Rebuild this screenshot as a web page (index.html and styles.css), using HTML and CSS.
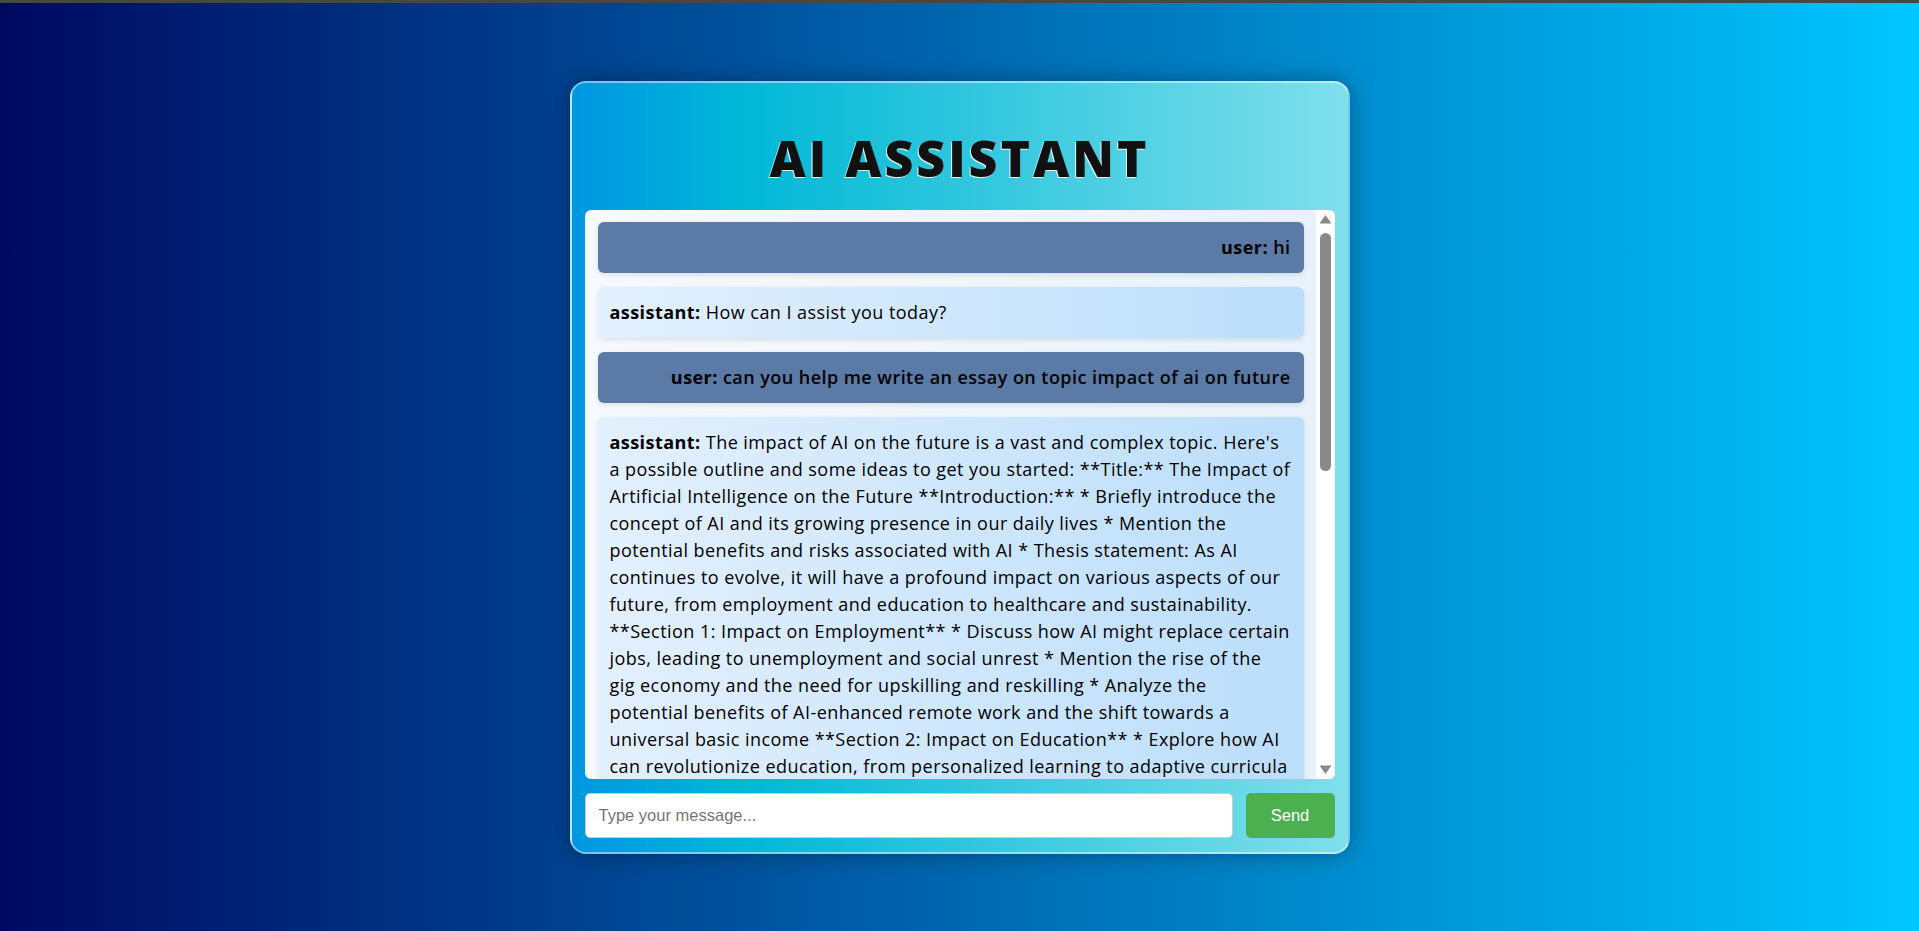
FILE: index.html
```html
<!DOCTYPE html>
<html lang="en">
<head>
<meta charset="utf-8">
<title>AI Assistant</title>
<link rel="stylesheet" href="styles.css">
</head>
<body>
<div class="topbar"></div>
<main class="page">
  <section class="card">
    <h1 class="title">AI ASSISTANT</h1>
    <div class="chat">
      <div class="messages">
        <div class="msg user"><b>user:</b> hi</div>
        <div class="msg assistant"><b>assistant:</b> How can I assist you today?</div>
        <div class="msg user"><b>user:</b> can you help me write an essay on topic impact of ai on future</div>
        <div class="msg assistant"><span class="lines"><b>assistant:</b> The impact of AI on the future is a vast and complex topic. Here's<br>a possible outline and some ideas to get you started: **Title:** The Impact of<br>Artificial Intelligence on the Future **Introduction:** * Briefly introduce the<br>concept of AI and its growing presence in our daily lives * Mention the<br>potential benefits and risks associated with AI * Thesis statement: As AI<br>continues to evolve, it will have a profound impact on various aspects of our<br>future, from employment and education to healthcare and sustainability.<br>**Section 1: Impact on Employment** * Discuss how AI might replace certain<br>jobs, leading to unemployment and social unrest * Mention the rise of the<br>gig economy and the need for upskilling and reskilling * Analyze the<br>potential benefits of AI-enhanced remote work and the shift towards a<br>universal basic income **Section 2: Impact on Education** * Explore how AI<br>can revolutionize education, from personalized learning to adaptive curricula</span><br>and intelligent tutoring systems * Discuss the potential risks of AI-driven education, such as bias in algorithms and the loss of human interaction * Examine the role of teachers in an AI-enhanced classroom **Section 3: Impact on Healthcare** * Describe how AI can improve diagnosis, treatment, and patient outcomes * Discuss the use of AI in medical research and drug discovery * Address concerns about data privacy and the ethics of AI in healthcare **Section 4: Impact on Sustainability** * Explain how AI can help address climate change through energy optimization and smart grids * Discuss the role of AI in agriculture, conservation, and resource management * Mention the environmental cost of training large AI models **Section 5: Ethical and Social Implications** * Explore issues of bias, fairness, and accountability in AI systems * Discuss the importance of transparency and explainability * Examine the need for regulation and international cooperation * Consider the impact of AI on privacy and surveillance **Conclusion:** * Summarize the main points of the essay * Restate the thesis statement * Offer a final thought on how society can prepare for an AI-driven future, emphasizing the importance of responsible development and human-centered design **Additional Tips:** * Use credible sources to support your arguments * Include real-world examples and case studies * Consider counterarguments and address them thoughtfully * Use clear and concise language. I hope this helps you get started on your essay! Let me know if you need any further assistance.</div>
      </div>
      <div class="scrollbar" aria-hidden="true">
        <svg class="arrow" width="19" height="19" viewBox="0 0 19 19"><path d="M9.5 6 L14.5 13 H4.5 Z" fill="#8a8a8a" stroke="#8a8a8a" stroke-width="1.2" stroke-linejoin="round"/></svg>
        <div class="track"><div class="thumb"></div></div>
        <svg class="arrow" width="19" height="19" viewBox="0 0 19 19"><path d="M9.5 13 L14.5 6 H4.5 Z" fill="#8a8a8a" stroke="#8a8a8a" stroke-width="1.2" stroke-linejoin="round"/></svg>
      </div>
    </div>
    <form class="composer" onsubmit="return false">
      <input class="input" type="text" placeholder="Type your message...">
      <button class="send" type="submit">Send</button>
    </form>
  </section>
</main>
</body>
</html>
```
FILE: styles.css
```css
* { box-sizing: border-box; }

html, body {
  margin: 0;
  height: 100%;
}

body {
  display: flex;
  flex-direction: column;
  background: linear-gradient(to right, #000960 0%, #00c6ff 100%);
  font-family: "Open Sans", "Noto Sans", sans-serif;
}

.topbar {
  height: 3px;
  background: #474747;
  flex: none;
}

.page {
  flex: 1;
  display: flex;
  align-items: center;
  justify-content: center;
}

.card {
  width: 780px;
  display: flex;
  flex-direction: column;
  padding: 13px 13px 14px;
  border: 2px solid rgba(255, 255, 255, 0.45);
  border-radius: 16px;
  background: linear-gradient(to right, #0096e2 0%, #00b8d6 22%, #80dfeb 100%);
  box-shadow: 0 0 22px rgba(0, 0, 0, 0.35);
}

.title {
  margin: 37px 0 27px;
  font-family: "Open Sans", "Noto Sans", sans-serif;
  font-weight: 800;
  font-size: 50px;
  line-height: 50px;
  letter-spacing: 3px;
  text-align: center;
  color: #111;
  text-shadow: -1px 1px 0 rgba(255, 255, 255, 0.85);
}

.chat {
  height: 569px;
  display: flex;
  overflow: hidden;
  border-radius: 6px;
  background: linear-gradient(to right, #f6f9fd, #e8f2fc);
}

.messages {
  flex: 1;
  min-width: 0;
  overflow: hidden;
  padding: 12px 12px 12px 13px;
}

.scrollbar {
  width: 19px;
  flex: none;
  display: flex;
  flex-direction: column;
  background: #fff;
}

.arrow {
  display: block;
  flex: none;
}

.track {
  flex: 1;
  padding: 4px 4px 0;
}

.thumb {
  width: 11px;
  height: 238px;
  border-radius: 6px;
  background: #8a8a8a;
}

.msg {
  padding: 12px 13px 12px 12px;
  margin-bottom: 14px;
  border-radius: 6px;
  font-size: 18px;
  line-height: 27px;
  letter-spacing: 0.45px;
  color: #000;
  box-shadow: 0 2px 5px rgba(0, 0, 0, 0.1);
}

.msg:last-child {
  margin-bottom: 0;
}

.msg b {
  font-weight: 700;
}

.lines {
  white-space: nowrap;
}

.user {
  background: #5b7ba6;
  text-align: right;
  font-weight: 600;
}

.assistant {
  background: linear-gradient(to right, #e3f0fd, #bbdefb);
}

.composer {
  display: flex;
  gap: 13px;
  margin: 14px 0 0;
}

.input {
  flex: 1;
  height: 45px;
  padding: 0 13px;
  border: 1px solid #ccc;
  border-radius: 5px;
  background: #fff;
  font-family: "Liberation Sans", Arial, sans-serif;
  font-size: 16.5px;
  color: #222;
  outline: none;
}

.input::placeholder {
  color: #757575;
}

.send {
  width: 89px;
  height: 45px;
  border: none;
  border-radius: 5px;
  background: #4caf50;
  color: #fff;
  font-family: "Liberation Sans", Arial, sans-serif;
  font-size: 16.5px;
  cursor: pointer;
}
```
